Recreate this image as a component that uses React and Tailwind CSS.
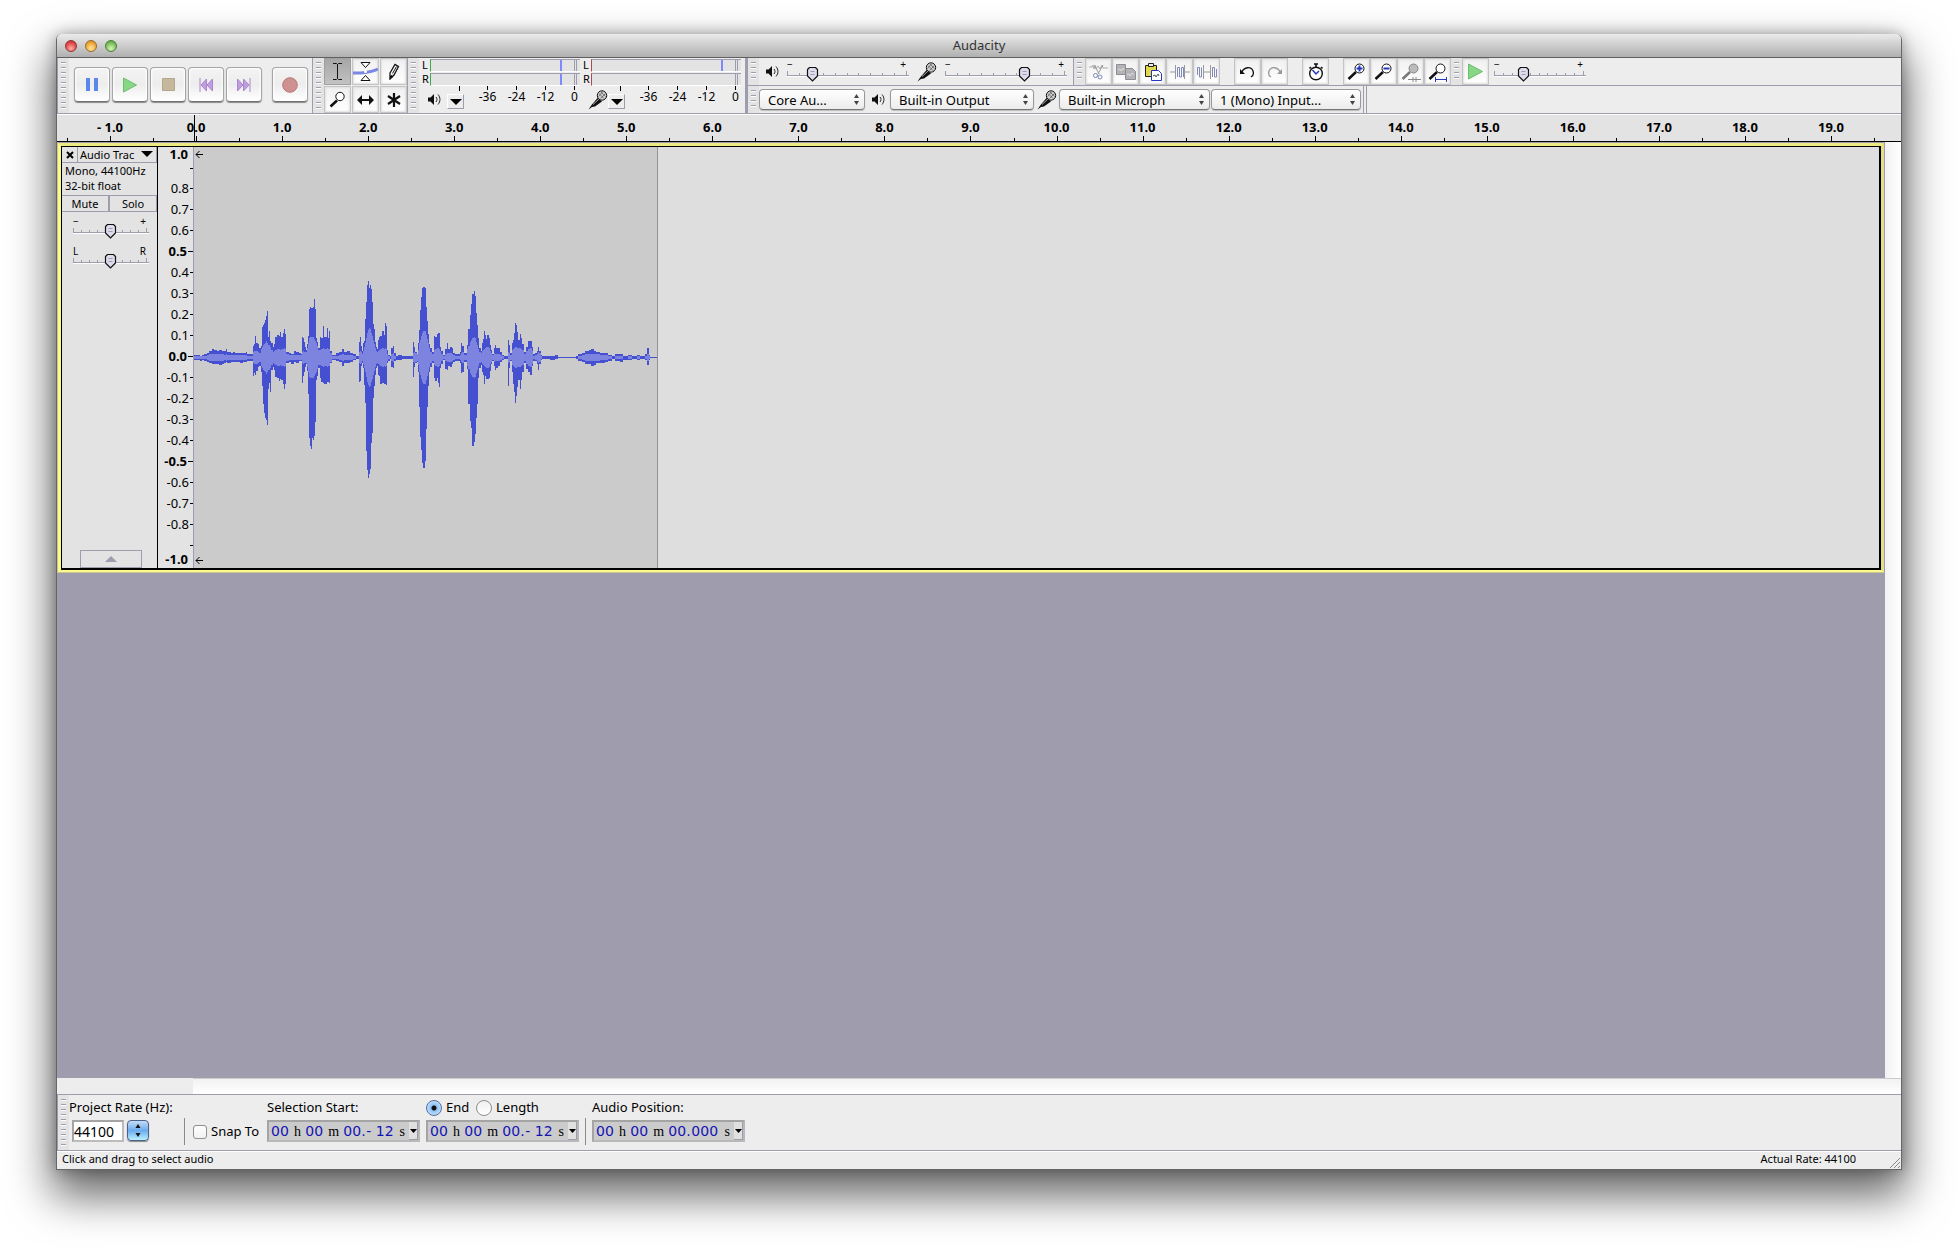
import React, { useState } from "react";

const rulerLabels = [
  "- 1.0", "0.0", "1.0", "2.0", "3.0", "4.0", "5.0", "6.0", "7.0", "8.0", "9.0",
  "10.0", "11.0", "12.0", "13.0", "14.0", "15.0", "16.0", "17.0", "18.0", "19.0",
];

const levelLabels = [
  "0.8", "0.7", "0.6", "0.5", "0.4", "0.3", "0.2", "0.1", "0.0",
  "-0.1", "-0.2", "-0.3", "-0.4", "-0.5", "-0.6", "-0.7", "-0.8",
];

// [x, peak above, peak below, rms]
const samples = [
  [0, 2, 2, 1], [6, 1, 3, 1], [8, 2, 2, 1], [10, 3, 3, 1], [13, 4, 4, 2], [15, 6, 5, 3], [18, 8, 6, 3], [20, 7, 6, 3],
  [23, 6, 6, 3], [25, 7, 7, 3], [28, 6, 6, 3], [30, 6, 5, 2], [32, 8, 4, 3], [33, 5, 5, 2], [37, 4, 4, 2], [39, 5, 4, 2],
  [41, 4, 4, 2], [46, 4, 5, 2], [49, 4, 4, 2], [52, 5, 4, 2], [53, 3, 3, 1], [57, 3, 3, 1],
  [59, 11, 18, 5], [60, 13, 15, 6], [61, 21, 17, 6], [62, 14, 13, 6], [64, 13, 9, 5], [65, 9, 8, 4], [67, 11, 14, 8],
  [68, 30, 28, 10], [69, 32, 46, 12], [70, 34, 55, 13], [71, 37, 60, 14], [72, 41, 62, 16], [73, 46, 67, 14],
  [74, 20, 31, 12], [75, 26, 25, 12], [76, 16, 34, 10], [77, 14, 12, 7], [79, 10, 9, 5], [80, 13, 12, 6], [81, 20, 19, 7],
  [83, 22, 20, 8], [85, 21, 23, 8], [86, 25, 21, 7], [87, 20, 22, 8], [89, 24, 26, 8], [90, 28, 31, 9], [91, 23, 26, 8],
  [92, 5, 5, 3], [95, 4, 4, 2], [97, 3, 6, 2], [100, 6, 4, 2], [102, 5, 5, 2], [105, 4, 3, 2], [107, 3, 3, 2],
  [108, 20, 25, 5], [109, 19, 18, 6], [110, 15, 14, 5], [111, 10, 9, 5], [112, 7, 6, 5], [113, 13, 13, 9], [114, 21, 36, 14],
  [115, 48, 80, 19], [116, 50, 88, 20], [117, 49, 91, 20], [118, 49, 80, 20], [119, 50, 82, 20], [120, 58, 78, 18],
  [121, 48, 64, 16], [122, 19, 22, 14], [123, 15, 18, 11], [124, 9, 10, 7], [126, 20, 20, 7], [127, 19, 24, 8],
  [129, 31, 25, 9], [130, 20, 26, 8], [133, 29, 24, 9], [134, 19, 24, 8], [135, 26, 25, 8], [136, 6, 5, 4], [138, 2, 2, 1],
  [142, 4, 3, 1], [145, 5, 4, 2], [148, 8, 8, 3], [150, 5, 5, 2], [153, 6, 5, 2], [156, 4, 4, 2], [159, 3, 2, 1], [162, 1, 1, 0],
  [165, 15, 24, 5], [166, 20, 23, 6], [167, 11, 8, 5], [168, 6, 5, 3], [169, 14, 10, 6], [170, 16, 27, 10],
  [171, 38, 45, 14], [172, 55, 93, 19], [173, 72, 112, 24], [174, 76, 120, 27], [175, 69, 116, 29], [176, 72, 111, 28],
  [177, 68, 85, 24], [178, 55, 75, 21], [179, 33, 40, 17], [180, 28, 28, 13], [181, 15, 17, 9], [182, 10, 10, 6], [183, 8, 8, 5],
  [184, 17, 17, 6], [185, 20, 18, 7], [186, 21, 26, 8], [188, 26, 25, 9], [190, 22, 26, 8], [191, 34, 26, 9], [192, 31, 27, 8],
  [193, 7, 5, 3], [194, 2, 3, 1], [196, 1, 1, 0], [197, 9, 9, 3], [199, 11, 10, 4], [200, 4, 3, 1], [202, 1, 2, 0], [204, 2, 2, 0], [208, 1, 1, 0],
  [219, 15, 19, 4], [220, 10, 9, 5], [221, 5, 5, 4], [223, 3, 4, 3], [224, 14, 14, 7], [225, 27, 49, 14], [226, 47, 79, 17],
  [227, 60, 92, 21], [228, 69, 105, 24], [229, 70, 110, 26], [231, 69, 103, 26], [232, 50, 71, 22], [233, 36, 49, 18], [234, 23, 28, 14],
  [235, 13, 14, 9], [236, 9, 9, 5], [238, 5, 5, 3], [240, 21, 20, 7], [241, 20, 23, 8], [243, 23, 20, 9], [244, 24, 25, 9],
  [245, 24, 29, 8], [246, 10, 10, 6], [247, 6, 6, 3], [249, 2, 2, 1], [251, 8, 11, 3], [253, 14, 12, 4], [254, 8, 8, 4],
  [256, 10, 9, 4], [258, 9, 6, 3], [259, 4, 4, 2], [261, 3, 3, 1], [266, 5, 5, 2], [267, 14, 15, 4], [268, 11, 14, 5],
  [270, 4, 4, 2], [273, 12, 11, 8], [274, 28, 46, 11], [276, 42, 63, 15], [277, 53, 70, 17], [278, 63, 88, 19], [280, 66, 84, 20],
  [281, 61, 76, 19], [282, 44, 60, 15], [283, 32, 46, 12], [284, 19, 20, 8], [285, 9, 10, 5], [287, 6, 7, 4], [288, 14, 14, 6],
  [289, 18, 17, 7], [290, 26, 26, 8], [291, 22, 18, 9], [292, 18, 21, 10], [293, 22, 21, 10], [295, 19, 20, 9], [296, 12, 13, 6],
  [297, 7, 6, 4], [298, 3, 3, 2], [300, 9, 8, 4], [301, 12, 12, 3], [302, 9, 10, 3], [304, 9, 8, 3], [306, 5, 4, 2], [308, 2, 2, 1],
  [310, 1, 1, 0], [314, 17, 28, 5], [315, 12, 10, 4], [316, 4, 3, 2], [318, 14, 14, 7], [319, 17, 26, 8], [320, 24, 34, 9],
  [321, 34, 45, 10], [322, 32, 38, 10], [323, 25, 29, 9], [324, 17, 22, 9], [326, 23, 31, 9], [327, 19, 22, 8], [328, 13, 14, 7],
  [330, 5, 5, 3], [332, 10, 11, 6], [334, 16, 14, 8], [336, 16, 17, 9], [338, 10, 8, 6], [339, 3, 3, 1], [341, 4, 3, 2],
  [343, 6, 6, 3], [344, 10, 12, 5], [345, 6, 6, 4], [347, 2, 2, 1], [348, 1, 1, 0], [356, 1, 2, 0], [361, 2, 1, 0], [364, 0, 0, 0],
  [382, 1, 1, 0], [384, 3, 3, 1], [388, 4, 4, 2], [391, 6, 6, 3], [395, 7, 6, 3], [397, 8, 8, 3], [400, 6, 7, 3], [402, 5, 5, 3],
  [406, 4, 5, 2], [411, 4, 4, 2], [414, 2, 3, 1], [418, 1, 1, 0], [421, 3, 3, 1], [426, 3, 4, 1], [429, 1, 2, 0], [434, 2, 2, 1],
  [438, 1, 1, 0], [443, 2, 2, 1], [446, 1, 1, 0], [451, 3, 2, 1], [453, 9, 7, 3], [455, 2, 2, 1], [456, 0, 0, 0], [463, 0, 0, 0],
];

const MID = 210;

const envelope = (up, down) => {
  let d = `M0 ${MID}`;
  samples.forEach((s) => {
    d += `H${s[0]}V${MID - up(s)}`;
  });
  for (let i = samples.length - 1; i > 0; i--) {
    d += `V${MID + 1 + down(samples[i - 1])}H${samples[i - 1][0]}`;
  }
  return d + "Z";
};

const peakPath = envelope((s) => s[1], (s) => s[2]);
const rmsPath = envelope((s) => s[3], (s) => (s[3] ? s[3] : -1));

const Grip = () => (
  <div className="flex w-[11px] shrink-0 justify-center self-stretch bg-[#e3e3e3] py-1">
    <div className="w-[5px] bg-[repeating-linear-gradient(to_bottom,#9e9cad_0,#9e9cad_1px,#ffffff_1px,#ffffff_2px,transparent_2px,transparent_5px)]"></div>
  </div>
);

const Speaker = () => (
  <svg width="14" height="13" viewBox="0 0 14 13" className="shrink-0">
    <path d="M1 4.500h2.500L7 1v11L3.500 8.500H1z" fill="#111" />
    <path d="M9 4c1.300 1.500 1.300 3.500 0 5M11 1.500c2.600 3 2.600 7 0 10" stroke="#222" fill="none" />
  </svg>
);

const Mic = () => (
  <svg width="20" height="20" viewBox="0 0 20 20" className="shrink-0">
    <path d="M.5 19.500l3-4.500 6.500-7.500 4 4-7 5-3 .5z" fill="#111" />
    <path d="M5 14.500l6-5.500" stroke="#aaa" />
    <circle cx="14" cy="5.500" r="4.700" fill="#ccc" stroke="#111" />
    <path d="M11 3.500l5 5M13 2l4.500 4.500M12.500 8.500l5-5M10.500 6.500l4-4.500" stroke="#555" strokeWidth="0.700" />
  </svg>
);

const Slider = ({ label, low, high, value, width, ticks }) => {
  const [pos, setPos] = useState(value);
  const x = Math.round(6 + (pos / 100) * (width - 12)) + 0.5;
  return (
    <div className="relative shrink-0">
      <div className="flex h-[6px] justify-between pr-[3px] text-[10px] leading-[6px] text-black">
        <span>{low}</span>
        <span>{high}</span>
      </div>
      <svg width={width} height="15" viewBox={`0 0 ${width} 15`} className="block">
        {Array.from({ length: ticks + 1 }, (_, i) => {
          const tx = Math.round((i * (width - 3)) / ticks) + 0.5;
          const end = i === 0 || i === ticks;
          return <path key={i} d={`M${tx} ${end ? 4 : 6}V8`} stroke="#9e9cad" />;
        })}
        <path d={`M0 8.500H${width}`} stroke="#9e9cad" />
        <path d={`M0 9.500H${width}`} stroke="#fff" />
        <path
          d={`M${x - 5} 2.500l2-2h6l2 2v6.500l-5 5-5-5z`}
          fill="#dcdcec"
          stroke="#111"
          strokeWidth="1.200"
        />
        <path d={`M${x - 2} 4.500h4M${x - 2} 7.500h4`} stroke="#9e9cad" />
      </svg>
      <input
        type="range"
        aria-label={label}
        value={pos}
        onChange={(e) => setPos(Number(e.target.value))}
        className="absolute inset-0 w-full opacity-0"
      />
    </div>
  );
};

const TransportButton = ({ label, children }) => (
  <button
    aria-label={label}
    className="flex h-[35px] w-[36px] items-center justify-center rounded border border-[#a5a5a5] border-b-[#707070] bg-linear-to-b from-[#f3f3f3] via-[#ededed] to-white shadow-[inset_0_0_2px_1px_#ffffff,0_1px_1px_#8a8a8a]"
  >
    {children}
  </button>
);

const ToolButton = ({ label, active, children }) => (
  <button
    aria-label={label}
    className={`flex h-[27px] w-[27px] shrink-0 items-center justify-center border ${
      active
        ? "border-[#a0a0a0] bg-linear-to-b from-[#a6a6a6] to-[#c2c2c2]"
        : "border-[#c4c4c4] bg-linear-to-b from-[#f0f0f0] to-white shadow-[inset_0_0_2px_1px_#e0e0e0]"
    }`}
  >
    {children}
  </button>
);

const Popup = ({ label, text, className }) => (
  <div className={`relative shrink-0 ${className}`}>
    <select
      aria-label={label}
      className="block h-[21px] w-full appearance-none rounded border border-[#999999] border-b-[#777777] bg-linear-to-b from-white to-[#ececec] pl-2 text-[13px] leading-[18px] text-black shadow-[0_1px_1px_#bbbbbb]"
    >
      <option>{text}</option>
    </select>
    <svg width="7" height="11" viewBox="0 0 7 11" className="pointer-events-none absolute top-[5px] right-[5px]">
      <path d="M3.500 0L6 4H1zM3.500 11L6 7H1z" fill="#444" />
    </svg>
  </div>
);

const Meter = ({ edge, peaks, label, icon }) => (
  <div className="flex w-[161px] flex-col">
    {["L", "R"].map((ch, i) => (
      <div key={ch} className="flex h-[14px] items-center gap-[3px] pl-[3px]">
        <span className="w-[5px] text-[11px] leading-[12px]">{ch}</span>
        <div className={`flex h-[13px] flex-1 border-t border-b border-l border-t-[#9e9cad] border-b-white bg-[#e3e3e3] ${edge}`}>
          <div className="flex-1"></div>
          {peaks[i] && <div className="w-[2px] bg-[#8088ff]"></div>}
          <div className={peaks[i]}></div>
          <div className="mr-[3px] w-[3px] border-r border-l border-[#9e9cad]"></div>
        </div>
      </div>
    ))}
    <div className="flex flex-1">
      <div className="flex w-[54px] shrink-0 items-center justify-between pr-[9px] pl-2">
        {icon}
        <div className="flex flex-col gap-[3px] self-start">
          <div className="mr-[4px] h-[5px] w-px self-end bg-black"></div>
          <button aria-label={label} className="flex h-[15px] w-[17px] items-center justify-center border border-t-white border-r-[#9e9cad] border-b-[#9e9cad] border-l-white">
            <svg width="12" height="6" viewBox="0 0 12 6" className="shrink-0">
              <path d="M0 0h12L6 6z" fill="#000" />
            </svg>
          </button>
        </div>
      </div>
      <div className="flex">
        {["-36", "-24", "-12", "0"].map((db) => (
          <div key={db} className="flex w-[29px] shrink-0 flex-col items-center text-[12px] leading-[13px]">
            <div className="h-[4px] w-px bg-black"></div>
            <span>{db}</span>
          </div>
        ))}
      </div>
    </div>
  </div>
);

const Lens = ({ children, dim }) => (
  <svg width="20" height="20" viewBox="0 0 20 20">
    <path d="M1.500 17L9 10" stroke={dim ? "#777" : "#111"} strokeWidth="2.500" />
    <circle cx="12.500" cy="6.500" r="4.500" fill={dim ? "#bbb" : "#fff"} stroke={dim ? "#888" : "#111"} />
    {children}
  </svg>
);

const Unit = ({ children }) => (
  <span className="font-['Liberation_Serif',serif] text-[14px] text-black">{children}</span>
);

const Digits = ({ label, value, className }) => (
  <input
    aria-label={label}
    defaultValue={value}
    className={`bg-transparent p-0 text-[14px] leading-[18px] text-[#1414b4] outline-none ${className}`}
  />
);

const TimeField = ({ label, tail }) => (
  <div className="flex h-[22px] w-[153px] items-center justify-between border-2 border-[#a4a4a4] border-r-[#b8b8b8] border-b-[#b8b8b8] bg-[#cbcbcb] pl-[2px] font-['DejaVu_Sans',sans-serif]">
    <Digits label={`${label} hours`} value="00" className="w-[19px]" />
    <Unit>h</Unit>
    <Digits label={`${label} minutes`} value="00" className="w-[19px]" />
    <Unit>m</Unit>
    <div className="flex items-center">
      <Digits label={`${label} seconds`} value="00" className="w-[18px]" />
      <span className="w-[5px] text-[14px] leading-[18px] text-[#1414b4]">.</span>
      <Digits label={`${label} milliseconds`} value={tail} className="w-[29px]" />
    </div>
    <Unit>s</Unit>
    <button aria-label={`${label} format`} className="flex h-[18px] w-[9px] items-center justify-center border-r border-b border-[#9e9cad] bg-[#e0e0e0]">
      <svg width="7" height="4" viewBox="0 0 7 4" className="shrink-0">
        <path d="M0 0h7L3.500 4z" fill="#000" />
      </svg>
    </button>
  </div>
);

const TitleBar = () => (
  <div className="flex h-6 items-center rounded-t-[5px] border-b border-[#5f5f5f] bg-linear-to-b from-[#ebebeb] to-[#b0b0b0] px-2">
    <div className="flex w-[60px] gap-2">
      <button aria-label="Close" className="h-3 w-3 rounded-full border border-[#8d3434] bg-[radial-gradient(circle_at_50%_75%,#ffb0a8,#e4484a_60%,#b92c2e)]"></button>
      <button aria-label="Minimize" className="h-3 w-3 rounded-full border border-[#9a6a2c] bg-[radial-gradient(circle_at_50%_75%,#ffe6a0,#f0a83c_60%,#c07c20)]"></button>
      <button aria-label="Zoom" className="h-3 w-3 rounded-full border border-[#4e7e3c] bg-[radial-gradient(circle_at_50%_75%,#d8f6b8,#7cc05c_60%,#4c8c38)]"></button>
    </div>
    <h1 className="flex-1 pr-[60px] text-center text-[13px] text-[#333333]">Audacity</h1>
  </div>
);

const Toolbars = () => (
  <div className="flex h-[56px] border-b border-[#9e9cad] bg-[#ededed]">
    {/* Transport */}
    <div className="flex items-center border-r border-l border-[#9e9cad]">
      <Grip />
      <div className="flex gap-[2px] pr-1 pb-[2px] pl-[5px]">
        <TransportButton label="Pause">
          <svg width="14" height="13">
            <path d="M1 0h4v13H1zM9 0h4v13H9z" fill="#5b86ec" />
          </svg>
        </TransportButton>
        <TransportButton label="Play">
          <svg width="16" height="16">
            <path d="M1.500 1l13 7-13 7z" fill="#86d886" stroke="#6cbc6c" />
          </svg>
        </TransportButton>
        <TransportButton label="Stop">
          <svg width="13" height="13">
            <path d="M.5.5h12v12H.5z" fill="#c6b89c" stroke="#b5a78c" />
          </svg>
        </TransportButton>
        <TransportButton label="Skip to Start">
          <svg width="14" height="14">
            <path d="M1 0v14M7.500 1v12L2 7zM13.500 1v12L8 7z" fill="#c09ce4" stroke="#a888c8" />
          </svg>
        </TransportButton>
        <TransportButton label="Skip to End">
          <svg width="14" height="14">
            <path d="M13 0v14M.5 1v12L6 7zM6.500 1v12L12 7z" fill="#c09ce4" stroke="#a888c8" />
          </svg>
        </TransportButton>
        <div className="w-[6px]"></div>
        <TransportButton label="Record">
          <svg width="16" height="16">
            <circle cx="8" cy="8" r="7.300" fill="#cf9090" stroke="#b87878" />
          </svg>
        </TransportButton>
      </div>
      <div className="w-9 hidden"></div>
    </div>

    {/* Tools */}
    <div className="flex border-r border-[#9e9cad]">
      <Grip />
      <div className="grid grid-cols-3 gap-px">
        <ToolButton label="Selection Tool" active>
          <svg width="9" height="17">
            <path d="M0 .5h3.500l1 1 1-1H9M0 16.500h3.500l1-1 1 1H9M4.500 1v15" stroke="#111" fill="none" />
          </svg>
        </ToolButton>
        <ToolButton label="Envelope Tool">
          <svg width="25" height="23">
            <path d="M8 2.500h9l-4.500 5zM8 20.500h9l-4.500-5z" fill="#fff" stroke="#111" />
            <path d="M0 13c8 0 16 0 25-4" stroke="#7c86e4" strokeWidth="3" fill="none" />
            <circle cx="12.500" cy="11.500" r="1.500" fill="#fff" />
          </svg>
        </ToolButton>
        <ToolButton label="Draw Tool">
          <svg width="12" height="17">
            <path d="M2 10l5-8.500 3.500 2L6 12l-4 4z" fill="#fff" stroke="#111" strokeWidth="1.300" />
            <path d="M4.500 10.500l4-7M2 15.500l1-3 2 1z" stroke="#111" />
          </svg>
        </ToolButton>
        <ToolButton label="Zoom Tool">
          <svg width="17" height="17">
            <path d="M1.500 15.500L8 9.500" stroke="#111" strokeWidth="2.500" />
            <circle cx="11" cy="5.500" r="4.200" fill="#fff" stroke="#111" />
          </svg>
        </ToolButton>
        <ToolButton label="Time Shift Tool">
          <svg width="17" height="10">
            <path d="M0 5l5-5v4h7V0l5 5-5 5V6H5v4z" fill="#111" />
          </svg>
        </ToolButton>
        <ToolButton label="Multi-Tool Mode">
          <svg width="14" height="14">
            <path d="M7 0v14M1 3l12 8M13 3L1 11" stroke="#111" strokeWidth="2.200" />
          </svg>
        </ToolButton>
      </div>
    </div>

    {/* Meters */}
    <div className="flex border-r border-[#9e9cad] pr-[4px]">
      <Grip />
      <Meter
        edge="border-l-[#3aa845]"
        peaks={["w-[12px]", "w-[12px]"]}
        label="Output meter options"
        icon={<Speaker />}
      />
      <Meter
        edge="border-l-[#b04a4a]"
        peaks={["w-[12px]", ""]}
        label="Input meter options"
        icon={<Mic />}
      />
    </div>

    <div className="flex min-w-0 flex-1 flex-col border-l-2 border-[#9e9cad]">
      <div className="flex h-[28px] items-center border-b border-[#9e9cad]">
        {/* Mixer */}
        <div className="flex items-center self-stretch border-r border-[#9e9cad] pr-[6px]">
          <Grip />
          <div className="flex items-center gap-[8px] pl-[6px]">
            <Speaker />
            <Slider label="Output volume" low="−" high="+" value={17} width={122} ticks={10} />
            <Mic />
            <Slider label="Input volume" low="−" high="+" value={66} width={122} ticks={10} />
          </div>
        </div>

        {/* Edit */}
        <div className="flex items-center self-stretch">
          <Grip />
          <ToolButton label="Cut">
            <svg width="20" height="17" fill="none">
              <path d="M0 4h3l1-2 1 4 1-4 1 4 2-3 2 3 2-4 1 3h5" stroke="#aaa" />
              <path d="M9 11L14 2M10 11L6 3" stroke="#999" />
              <circle cx="6.500" cy="12.500" r="2" stroke="#8088b8" />
              <circle cx="11" cy="14" r="2" stroke="#8088b8" />
            </svg>
          </ToolButton>
          <ToolButton label="Copy">
            <svg width="20" height="16">
              <path d="M.5.5h9v10h-9zM9.500 4.500h7l3 3v8h-10z" fill="#b4b4b4" stroke="#8c8c98" />
              <path d="M2 6l2-1 1 2 2-3 1 2M11 11l2-1 1 2 2-3 2 2" stroke="#ddd" fill="none" />
            </svg>
          </ToolButton>
          <ToolButton label="Paste">
            <svg width="18" height="18">
              <path d="M1.500 2.500h11v11h-11z" fill="#e2d84c" stroke="#222" />
              <path d="M4.500.5h5v3h-5z" fill="#eee" stroke="#222" />
              <path d="M7.500 7.500h7l3 3v7h-10z" fill="#fff" stroke="#2338c0" />
              <path d="M9 13l2-1 1 2 2-3 1 2" stroke="#555" fill="none" />
            </svg>
          </ToolButton>
          <ToolButton label="Trim">
            <svg width="20" height="16" fill="none">
              <path d="M0 8h5M15 8h5M5.500 1v14M14.500 1v14" stroke="#999" />
              <path d="M7.500 13V3.500h2V13h2V3.500h2V13" stroke="#8088b8" />
            </svg>
          </ToolButton>
          <ToolButton label="Silence">
            <svg width="20" height="16" fill="none">
              <path d="M6 8h8M6.500 1v14M13.500 1v14" stroke="#999" />
              <path d="M.5 11V3.500h2V13h2V3.500M15.500 13V3.500h2V13h2V5" stroke="#8088b8" />
            </svg>
          </ToolButton>
          <div className="w-[14px]"></div>
          <ToolButton label="Undo">
            <svg width="15" height="12" fill="none">
              <path d="M2 6c2-5 9-6 11-1 1 3 0 5-2 6" stroke="#111" strokeWidth="1.300" />
              <path d="M0 3v5h5z" fill="#111" />
            </svg>
          </ToolButton>
          <ToolButton label="Redo">
            <svg width="15" height="12" fill="none">
              <path d="M13 6C11 1 4 0 2 5c-1 3 0 5 2 6" stroke="#999" strokeWidth="1.300" />
              <path d="M15 3v5h-5z" fill="#999" />
            </svg>
          </ToolButton>
          <div className="w-[14px]"></div>
          <ToolButton label="Sync-Lock Tracks">
            <svg width="16" height="18" fill="none">
              <circle cx="8" cy="10.500" r="6.300" stroke="#111" strokeWidth="1.400" fill="#fff" />
              <path d="M6 1h4M8 1v3M13 4l1.500 1.500M3 4L1.500 5.500" stroke="#111" strokeWidth="1.600" />
              <path d="M4.500 7l3.500 4 3-3" stroke="#2338c0" strokeWidth="1.500" />
            </svg>
          </ToolButton>
          <div className="w-[14px]"></div>
          <ToolButton label="Zoom In">
            <Lens>
              <path d="M12.500 3.500v6M9.500 6.500h6" stroke="#2338c0" strokeWidth="2" />
            </Lens>
          </ToolButton>
          <ToolButton label="Zoom Out">
            <Lens>
              <path d="M9.500 6.500h6" stroke="#2338c0" strokeWidth="2" />
            </Lens>
          </ToolButton>
          <ToolButton label="Fit Selection">
            <Lens dim>
              <path d="M7 17.500h13M12 15v5M15 15v5" stroke="#888" />
            </Lens>
          </ToolButton>
          <ToolButton label="Fit Project">
            <Lens>
              <path d="M7 17.500h12M7.500 15v5M18.500 15v5" stroke="#2338c0" />
            </Lens>
          </ToolButton>
        </div>

        {/* Transcription */}
        <div className="flex items-center self-stretch">
          <Grip />
          <ToolButton label="Play at Speed">
            <svg width="17" height="17">
              <path d="M1.500 1l14 7.500-14 7.500z" fill="#86d886" stroke="#6cbc6c" />
            </svg>
          </ToolButton>
          <div className="pl-[5px]">
            <Slider label="Playback speed" low="−" high="+" value={29} width={92} ticks={10} />
          </div>
        </div>
      </div>

      {/* Devices */}
      <div className="flex h-[27px] items-center">
        <Grip />
        <Popup label="Audio host" text="Core Au..." className="w-[106px]" />
        <div className="flex w-[25px] justify-center">
          <Speaker />
        </div>
        <Popup label="Output device" text="Built-in Output" className="w-[144px]" />
        <div className="flex w-[25px] justify-center">
          <Mic />
        </div>
        <Popup label="Input device" text="Built-in Microph" className="w-[151px]" />
        <div className="w-px"></div>
        <Popup label="Input channels" text="1 (Mono) Input..." className="w-[150px]" />
        <div className="ml-[2px] w-[4px] self-stretch border-r border-l border-[#9e9cad]"></div>
      </div>
    </div>
  </div>
);

const TimeRuler = () => (
  <div className="relative flex h-[28px] border-t border-b border-t-white border-b-black bg-[#e3e3e3] pr-[26px] pl-[10px]">
    {rulerLabels.map((t) => (
      <div key={t} className="flex flex-1 flex-col items-center justify-between text-[13px] font-bold text-black">
        <span className="pt-1 leading-[17px]">{t}</span>
        <div className="flex w-full items-end">
          <div className="h-[3px] w-px bg-black"></div>
          <div className="flex flex-1 justify-center">
            <div className="h-[5px] w-px bg-black"></div>
          </div>
        </div>
      </div>
    ))}
    <div className="h-[3px] w-px self-end bg-black"></div>
    <div className="absolute top-0 bottom-0 left-[137px] w-px bg-black"></div>
  </div>
);

const TrackPanel = () => (
  <div className="flex w-[96px] shrink-0 flex-col border-r border-black bg-[#e3e3e3] text-[11px] text-black">
    <div className="flex h-[16px] border-b border-[#9e9cad]">
      <button aria-label="Close track" className="flex w-[16px] items-center justify-center border-r border-[#9e9cad]">
        <svg width="8" height="8" className="shrink-0">
          <path d="M1 1l6 6M7 1L1 7" stroke="#000" strokeWidth="2" />
        </svg>
      </button>
      <button className="flex flex-1 items-center justify-between border-r border-[#9e9cad] pr-[3px] pb-px pl-[2px] leading-[13px]">
        <span>Audio Trac</span>
        <svg width="12" height="6" className="shrink-0">
          <path d="M0 0h12L6 6z" fill="#000" />
        </svg>
      </button>
    </div>
    <div className="h-[32px] pl-[3px] leading-[15px]">
      <div>Mono, 44100Hz</div>
      <div>32-bit float</div>
    </div>
    <div className="flex h-[17px] border-t border-b border-[#9e9cad]">
      <button className="flex-1 border-r-2 border-[#9e9cad] leading-[13px]">Mute</button>
      <button className="flex-1 border-r border-[#9e9cad] leading-[13px]">Solo</button>
    </div>
    <div className="flex flex-col items-start gap-[9px] pt-[6px] pl-[11px]">
      <Slider label="Gain" low="−" high="+" value={48} width={76} ticks={9} />
      <Slider label="Pan" low="L" high="R" value={48} width={76} ticks={9} />
    </div>
    <div className="flex-1"></div>
    <button aria-label="Collapse track" className="ml-[18px] flex h-[18px] w-[62px] items-center justify-center border border-[#9e9cad]">
      <svg width="12" height="6">
        <path d="M6 0l6 6H0z" fill="#9e9cad" />
      </svg>
    </button>
  </div>
);

const LevelRuler = () => (
  <div className="flex w-[36px] shrink-0 flex-col border-r border-[#9e9cad] bg-[#e3e3e3] text-[13px] text-black">
    <div className="h-[15px] pr-[5px] text-right leading-[14px] font-bold">1.0</div>
    <div className="mb-[3px] flex h-[13px] items-center justify-end">
      <div className="h-px w-[3px] bg-black"></div>
    </div>
    {levelLabels.map((l) => {
      const strong = ["0.5", "0.0", "-0.5"].includes(l);
      return (
        <div key={l} className="flex h-[21px] items-center justify-end gap-px leading-[21px]">
          <span className={strong ? "font-bold" : ""}>{l}</span>
          <div className={strong ? "h-px w-[5px] bg-black" : "h-px w-[3px] bg-black"}></div>
        </div>
      );
    })}
    <div className="mt-1 flex h-[13px] items-center justify-end">
      <div className="h-px w-[3px] bg-black"></div>
    </div>
    <div className="h-[16px] pr-[5px] text-right leading-[14px] font-bold">-1.0</div>
  </div>
);

const ClipArrow = () => (
  <svg width="8" height="9" className="mx-px my-[3px]">
    <path d="M1 4.500h7M4.500 1L1 4.500 4.500 8" stroke="#000" fill="none" />
  </svg>
);

const Track = () => (
  <div className="border border-[#9e9cad] border-l-[#c8c890] border-b-[#c8c890]">
    <div className="border-t-[3px] border-r-[3px] border-b-2 border-l-[3px] border-t-[#ecea80] border-r-[#e4de84] border-b-[#fbf88e] border-l-[#fbf88e]">
      <div className="flex border-t border-r-2 border-b-2 border-black bg-[#dedede]">
        <div className="w-px bg-black"></div>
        <TrackPanel />
        <LevelRuler />
        <div className="relative w-[464px] shrink-0 border-r border-[#949494] bg-[#cbcbcb]">
          <svg width="463" height="421" className="block" shapeRendering="crispEdges">
            <path d={peakPath} fill="#4450d0" />
            <path d={rmsPath} fill="#7c84e0" />
          </svg>
          <div className="absolute inset-0 flex flex-col justify-between">
            <ClipArrow />
            <ClipArrow />
          </div>
        </div>
      </div>
    </div>
  </div>
);

const SelectionBar = () => (
  <div className="flex h-[57px] border-t border-b border-l border-[#9e9cad] bg-[#ededed] text-[13px] text-black">
    <Grip />
    <div className="flex w-[115px] flex-col">
      <label htmlFor="rate" className="h-[25px] leading-[25px]">Project Rate (Hz):</label>
      <div className="flex gap-[3px] pl-[3px]">
        <input
          id="rate"
          defaultValue="44100"
          className="h-[22px] w-[52px] border-2 border-[#a4a4a4] border-r-[#bcbcbc] border-b-[#bcbcbc] bg-white text-[14px] leading-[18px]"
        />
        <button aria-label="Choose project rate" className="flex h-[21px] w-[22px] items-center justify-center rounded border border-[#4d5f8c] bg-linear-to-b from-[#c4dcf6] via-[#6cabec] to-[#b8f0ff] shadow-[0_1px_1px_#888888]">
          <svg width="6" height="13">
            <path d="M3 0l2.500 4h-5zM3 13L.5 9h5z" fill="#111" />
          </svg>
        </button>
      </div>
    </div>
    <div className="mb-[5px] h-[27px] w-px self-end bg-[#8a8a8a]"></div>
    <label className="mb-[7px] flex h-[22px] w-[82px] items-center gap-[4px] self-end pl-2">
      <input type="checkbox" className="h-[14px] w-[14px] appearance-none rounded-[3px] border border-[#8e8e8e] bg-linear-to-b from-white to-[#f0f0f0]" />
      Snap To
    </label>
    <div className="flex w-[159px] flex-col">
      <span className="h-[25px] leading-[25px]">Selection Start:</span>
      <TimeField label="Selection start" tail="- 12" />
    </div>
    <div className="flex w-[159px] flex-col">
      <div className="flex h-[25px] gap-[4px]">
        <label className="flex w-[46px] items-center gap-[4px]">
          <input
            type="radio"
            name="range"
            defaultChecked
            className="h-[16px] w-[16px] shrink-0 appearance-none rounded-full border border-[#5a6a9a] bg-[radial-gradient(circle,#111111_0,#111111_2px,#8cc0f4_3px,#c8e8ff_8px)]"
          />
          End
        </label>
        <label className="flex items-center gap-[4px]">
          <input
            type="radio"
            name="range"
            className="h-[16px] w-[16px] shrink-0 appearance-none rounded-full border border-[#8e8e8e] bg-linear-to-b from-[#f0f0f0] to-white"
          />
          Length
        </label>
      </div>
      <TimeField label="Selection end" tail="- 12" />
    </div>
    <div className="mr-[6px] mb-[5px] h-[27px] w-px self-end bg-[#8a8a8a]"></div>
    <div className="flex flex-col">
      <span className="h-[25px] leading-[25px]">Audio Position:</span>
      <TimeField label="Audio position" tail="000" />
    </div>
  </div>
);

const StatusBar = () => (
  <div className="flex h-[18px] justify-between border-t border-white bg-[#ededed] pl-[5px] text-[11px] leading-[14px] text-black">
    <span>Click and drag to select audio</span>
    <div className="flex gap-[33px]">
      <span>Actual Rate: 44100</span>
      <svg width="12" height="12" className="self-end">
        <path d="M1 11L11 1M5 11l6-6M9 11l2-2" stroke="#888" />
      </svg>
    </div>
  </div>
);

const App = () => {
  return (
    <div className="flex h-screen min-h-[800px] flex-col overflow-hidden bg-white px-14 pt-[34px] pb-[78px] font-['Noto_Sans','Open_Sans',sans-serif]">
      <div className="flex flex-1 flex-col rounded-t-[6px] border-r border-b border-l border-[#666666] bg-[#ededed] shadow-[0_22px_44px_4px_rgba(0,0,0,0.6),0_0_14px_rgba(0,0,0,0.3)]">
        <TitleBar />
        <Toolbars />
        <TimeRuler />
        <div className="flex flex-1">
          <div className="flex-1 bg-[#9e9cad]">
            <Track />
          </div>
          <div className="w-[16px] bg-linear-to-r from-[#f2f2f2] to-white"></div>
        </div>
        <div className="flex h-[16px]">
          <div className="w-[136px] bg-[#ededed]"></div>
          <div className="flex-1 border-t border-[#cccccc] bg-linear-to-b from-[#f2f2f2] to-white"></div>
        </div>
        <SelectionBar />
        <StatusBar />
      </div>
    </div>
  );
};

export default App;
